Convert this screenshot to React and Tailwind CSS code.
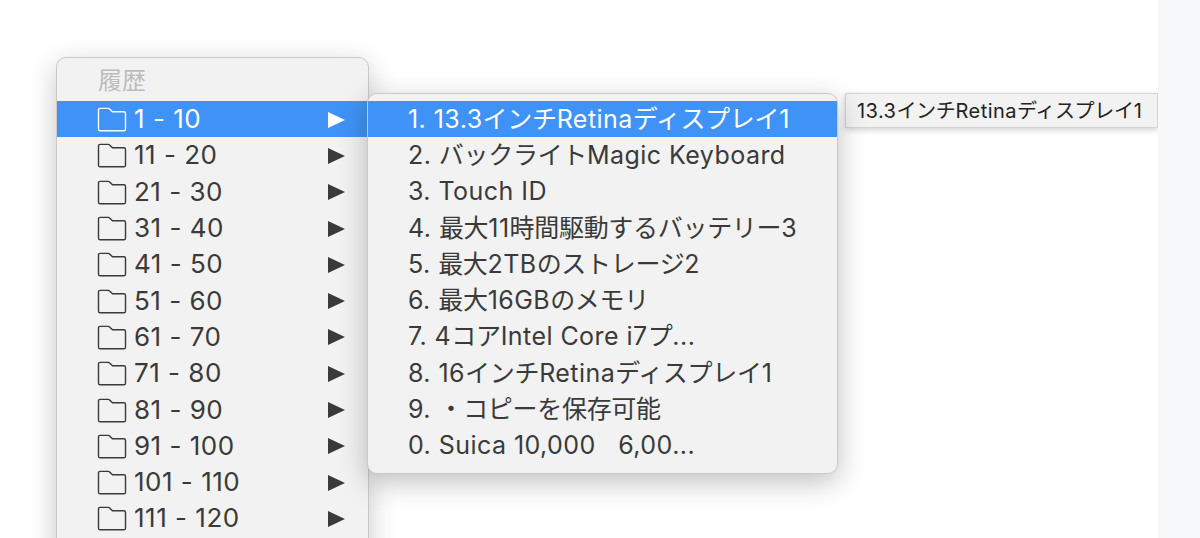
const ranges = ["1 - 10", "11 - 20", "21 - 30", "31 - 40", "41 - 50", "51 - 60", "61 - 70", "71 - 80", "81 - 90", "91 - 100", "101 - 110", "111 - 120"];

const items = [
  "1. 13.3インチRetinaディスプレイ1",
  "2. バックライトMagic Keyboard",
  "3. Touch ID",
  "4. 最大11時間駆動するバッテリー3",
  "5. 最大2TBのストレージ2",
  "6. 最大16GBのメモリ",
  "7. 4コアIntel Core i7プ...",
  "8. 16インチRetinaディスプレイ1",
  "9. ・コピーを保存可能",
  "0. Suica 10,000\u00a0\u00a0\u00a06,00...",
];

const font = { fontFamily: "Inter, 'Noto Sans CJK JP', sans-serif" };
const cjk = /^[\u3000-\u30ff\u4e00-\u9fff]/;

// latin runs sit a bit wider than the kana/kanji ones in the screenshot
function MixedText({ text }) {
  const runs = text.split(/([\u3000-\u30ff\u4e00-\u9fff]+)/).filter(Boolean);
  return runs.map((run, i) => (
    <span key={i} className={cjk.test(run) ? "tracking-[-0.3px]" : "tracking-[0.45px]"}>
      {run}
    </span>
  ));
}

function FolderIcon({ className }) {
  return (
    <svg viewBox="0 0 30 26" className={className} fill="none" stroke="currentColor" strokeWidth="1.4">
      <path d="M1.5 4V23.2a1.6 1.6 0 0 0 1.6 1.6h23.8a1.6 1.6 0 0 0 1.6-1.6V7.4a1.6 1.6 0 0 0-1.6-1.6H15.5L12.6 3a1.6 1.6 0 0 0-1.2-.6H3.1A1.6 1.6 0 0 0 1.5 4z" />
    </svg>
  );
}

function Row({ label, active }) {
  return (
    <div className={`flex items-center h-[36.3px] pl-[40px] ${active ? "bg-[#3f93f6] text-white" : "text-[#3a3a3a]"}`}>
      <FolderIcon className="w-[30px] h-[26px] shrink-0" />
      <span className="ml-[7px] flex-1 text-[26px] leading-none tracking-[0.5px]">{label}</span>
      <svg viewBox="0 0 17 16" className="w-[17px] h-[16px] mr-[23px] mt-[1px]" fill="currentColor">
        <path d="M0 0L17 8L0 16z" />
      </svg>
    </div>
  );
}

export default function App() {
  return (
    <div className="flex w-[1200px] h-[538px] overflow-hidden bg-white" style={font}>
      <div className="flex flex-1 items-start pt-[57px] pl-[56px]">
        {/* main menu */}
        <div className="w-[313px] h-[520px] shrink-0 bg-[#f2f2f2] border border-[#c9c9c9] rounded-[10px] shadow-[0_8px_28px_rgba(0,0,0,0.22)] overflow-hidden">
          <div className="h-[43px] pl-[41px] pt-[3px] flex items-center text-[24px] leading-none text-[#bdbdbd]">履歴</div>
          {ranges.map((r, i) => (
            <Row key={r} label={r} active={i === 0} />
          ))}
        </div>

        {/* submenu */}
        <div className="relative mt-[36px] -ml-[2px] w-[471px] shrink-0 bg-[#f2f2f2] border border-[#c9c9c9] rounded-[10px] shadow-[0_8px_28px_rgba(0,0,0,0.25)] pt-[7px] pb-[9px] overflow-hidden">
          {items.map((t, i) => (
            <div key={i} className={`h-[36.3px] pl-[40px] flex items-center text-[25px] leading-none whitespace-pre ${i === 0 ? "bg-[#3f93f6] text-white" : "text-[#3a3a3a]"}`}>
              <MixedText text={t} />
            </div>
          ))}
        </div>

        {/* tooltip */}
        <div className="mt-[36px] ml-[7px] w-[313px] h-[35px] shrink-0 pl-[11px] flex items-center bg-[#f2f2f2] border border-[#d4d4d4] shadow-[0_2px_6px_rgba(0,0,0,0.18)] text-[20px] leading-none text-[#222] whitespace-pre">
          <MixedText text="13.3インチRetinaディスプレイ1" />
        </div>
      </div>
      <div className="w-[42px] shrink-0 bg-[#f7f8fa]" />
    </div>
  );
}
